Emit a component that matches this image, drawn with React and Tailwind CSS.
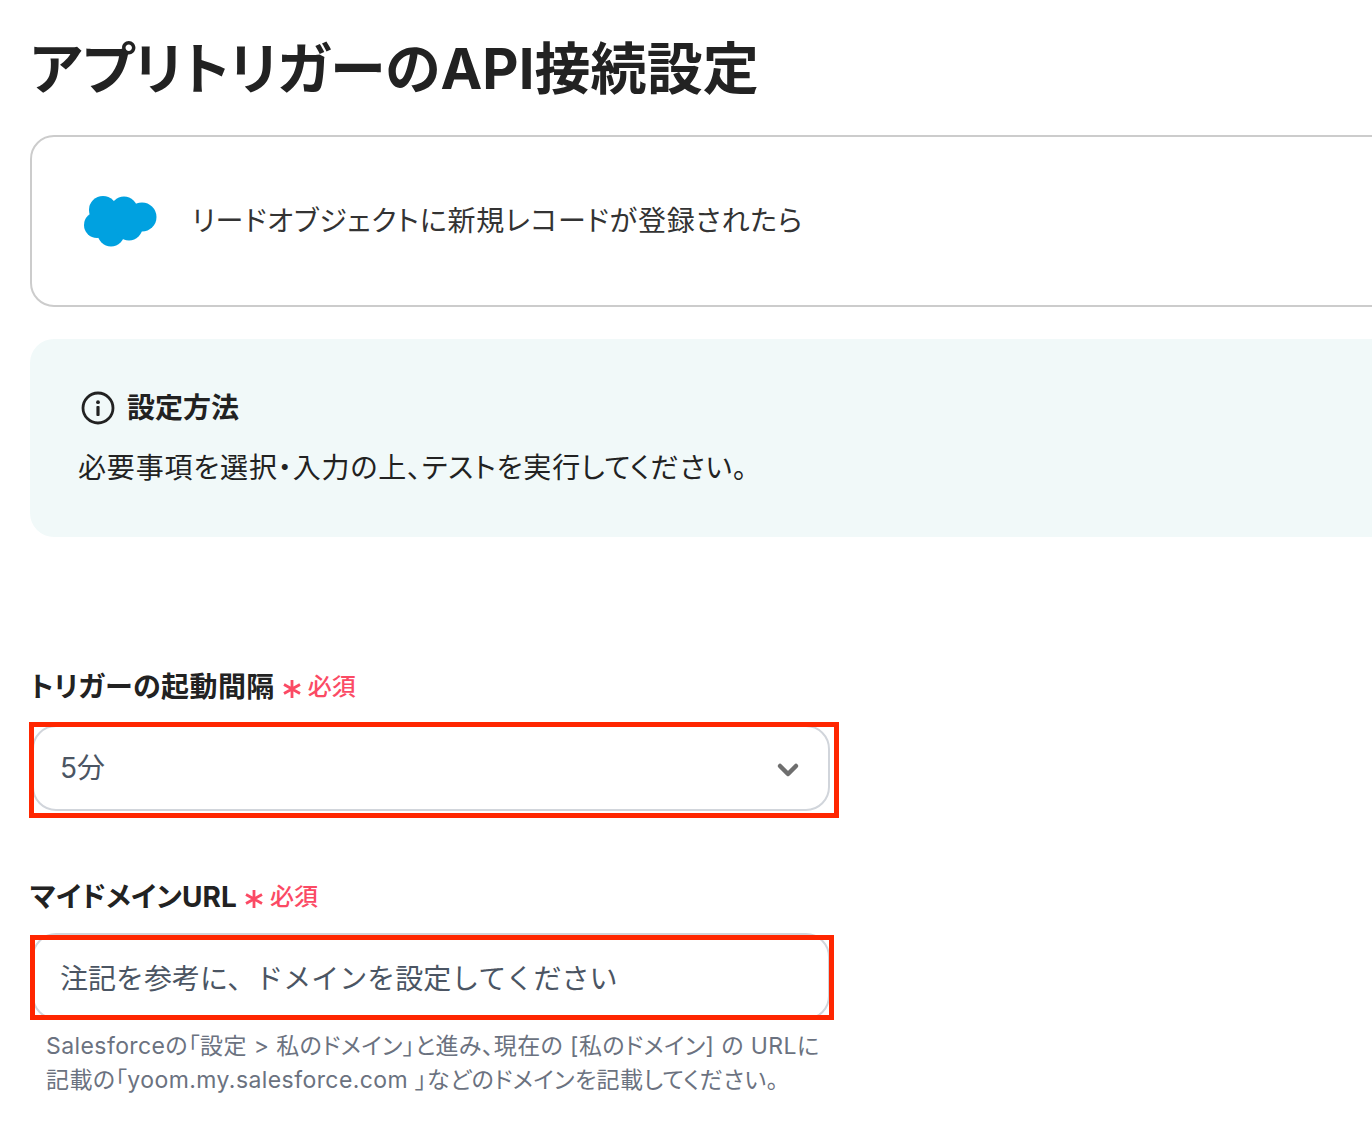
import { ChevronDown } from 'lucide-react';

const fontStack = { fontFamily: 'Inter, "Noto Sans CJK JP", sans-serif' };

function SalesforceLogo() {
    return (
        <svg width="74" height="52" viewBox="0 0 74 52" fill="#00a1e0" className="shrink-0">
            <circle cx="19" cy="15" r="14" />
            <circle cx="40" cy="15" r="13.5" />
            <circle cx="58" cy="22" r="14.5" />
            <circle cx="13" cy="30" r="13" />
            <circle cx="27" cy="38" r="13.5" />
            <circle cx="45" cy="32" r="13.5" />
            <rect x="14" y="14" width="44" height="20" />
        </svg>
    );
}

function InfoIcon() {
    return (
        <svg width="34" height="34" viewBox="0 0 34 34" fill="none" className="shrink-0">
            <circle cx="17" cy="17" r="15" stroke="#222" strokeWidth="2.8" />
            <circle cx="17" cy="11.2" r="1.9" fill="#222" />
            <rect x="15.4" y="15" width="3.2" height="10" rx="1" fill="#222" />
        </svg>
    );
}

function RequiredMark() {
    return (
        <span className="flex items-center text-[24px] leading-none font-medium text-[#fb4a64]">
            <svg width="20" height="20" viewBox="0 0 20 20" className="mt-1 mr-1.5" stroke="#fb4a64" strokeWidth="2.8">
                <path d="M10 1v18M2 5.5l16 9M18 5.5l-16 9" />
            </svg>
            必須
        </span>
    );
}

export default function App() {
    return (
        <div className="w-[1372px] h-[1138px] overflow-hidden bg-white pl-[30px] [font-feature-settings:'palt']" style={fontStack}>
            <h1 className="text-[56px] leading-[64px] font-bold text-[#222] pt-[37px] tracking-[0.1px] whitespace-nowrap">
                アプリトリガーのAPI接続設定
            </h1>

            {/* Trigger card */}
            <div className="mt-[34px] w-[1500px] h-[172px] flex items-center gap-[34px] pl-[52px] border-2 border-[#cccccc] rounded-[24px]">
                <SalesforceLogo />
                <span className="text-[28px] tracking-[0.85px] text-[#333] whitespace-nowrap">リードオブジェクトに新規レコードが登録されたら</span>
            </div>

            {/* Info box */}
            <div className="mt-[32px] w-[1500px] h-[198px] bg-[#f1f9f9] rounded-[24px] pl-[48px] pt-[51px]">
                <div className="flex items-center gap-[12px] pl-[3px] h-[36px]">
                    <InfoIcon />
                    <span className="text-[28px] font-bold text-[#222]">設定方法</span>
                </div>
                <p className="mt-[24px] text-[28px] leading-[36px] tracking-[0.85px] text-[#222] whitespace-nowrap">
                    必要事項を選択・入力の上、テストを実行してください。
                </p>
            </div>

            {/* Interval */}
            <div className="mt-[130px] flex items-center gap-[7px] h-[40px]">
                <span className="text-[28px] font-bold tracking-[0.45px] text-[#222]">トリガーの起動間隔</span>
                <RequiredMark />
            </div>
            <div className="relative mt-[18px] ml-[2px] w-[798px] h-[86px] flex items-center justify-between pl-[26px] pr-[24px] border-2 border-[#d1d5db] rounded-[24px]">
                <span className="text-[28px] text-[#4b5563]">5分</span>
                <ChevronDown size={32} strokeWidth={3.4} className="mt-[3px] text-[#6e6e6e]" />
                <div className="absolute left-[-5px] top-[-5px] w-[810px] h-[96px] border-[5px] border-[#ff2600]"></div>
            </div>

            {/* Domain */}
            <div className="mt-[66px] flex items-center gap-[7px] h-[40px]">
                <span className="text-[28px] font-bold tracking-[0.1px] text-[#222]">マイドメインURL</span>
                <RequiredMark />
            </div>
            <div className="relative mt-[16px] ml-[2px] w-[798px] h-[87px] flex items-center pl-[26px] pt-[4px] border-2 border-[#d1d5db] rounded-[24px] [font-feature-settings:normal]">
                <span className="text-[28px] text-[#4b5563] whitespace-nowrap">注記を参考に、ドメインを設定してください</span>
                <div className="absolute left-[-4px] top-[0px] w-[804px] h-[85px] border-[5px] border-[#ff2600]"></div>
            </div>
            <p className="mt-[9px] ml-[16px] w-[830px] text-[23px] leading-[34px] tracking-[0.42px] text-[#6b7280] whitespace-nowrap">
                Salesforceの「設定 &gt; 私のドメイン」と進み、現在の [私のドメイン] の URLに
                <br />
                記載の「yoom.my.salesforce.com 」などのドメインを記載してください。
            </p>
        </div>
    );
}
